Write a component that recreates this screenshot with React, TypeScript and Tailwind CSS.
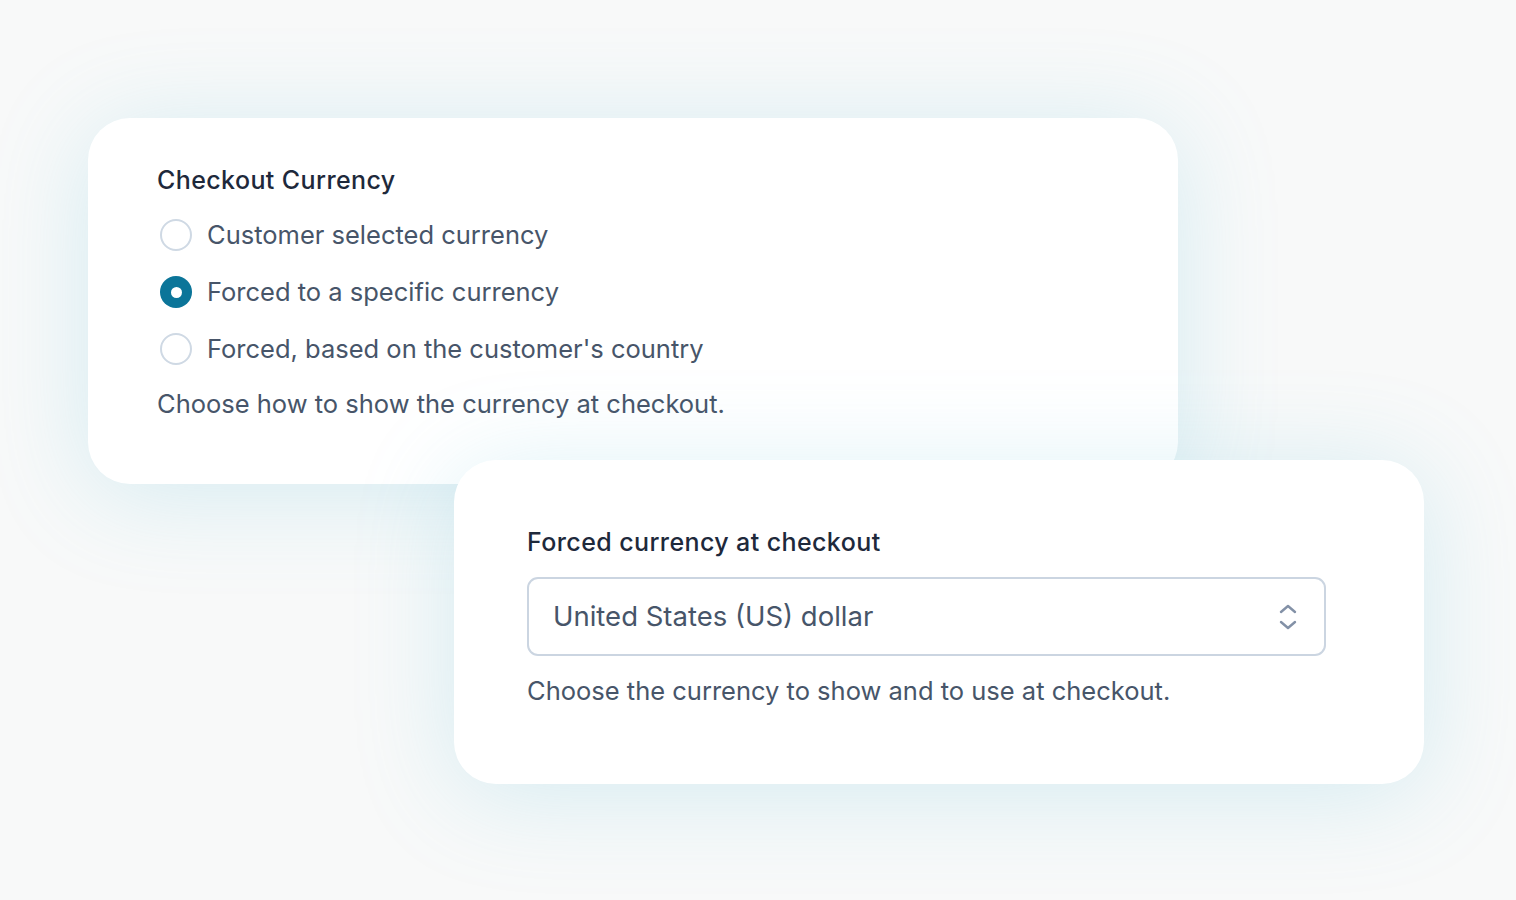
import React from "react";

function Radio({ checked, label }: { checked?: boolean; label: string }) {
  return (
    <div className="flex items-center h-[32px]">
      {checked ? (
        <span className="w-[32px] h-[32px] rounded-full bg-[#0b7599] flex items-center justify-center ml-[3px]">
          <span className="w-[11px] h-[11px] rounded-full bg-white" />
        </span>
      ) : (
        <span className="w-[32px] h-[32px] rounded-full border-2 border-[#cfd9e4] bg-white ml-[3px]" />
      )}
      <span className="ml-[15px] text-[25.5px] text-[#475569]">{label}</span>
    </div>
  );
}

export default function App() {
  return (
    <div
      className="w-full min-h-[900px] bg-[#f8f9f9] pt-[118px] overflow-hidden"
      style={{ fontFamily: "Inter, 'Noto Sans', sans-serif" }}
    >
      <div className="relative z-0 ml-[88px] w-[1090px] h-[366px] rounded-[42px] bg-white shadow-[0_10px_100px_rgba(90,190,220,0.22)] pl-[69px] pt-[46px]">
        <div className="text-[25px] font-medium text-[#1e293b] leading-[32px] tracking-[0.4px]">Checkout Currency</div>
        <div className="mt-[23px] flex flex-col gap-[25px]">
          <Radio label="Customer selected currency" />
          <Radio checked label="Forced to a specific currency" />
          <Radio label="Forced, based on the customer's country" />
        </div>
        <div className="mt-[22px] text-[25.5px] text-[#475569] leading-[34px]">
          Choose how to show the currency at checkout.
        </div>
      </div>
      <div className="relative z-10 -mt-[24px] ml-[454px] w-[970px] h-[324px] rounded-[42px] bg-white shadow-[0_10px_100px_rgba(90,190,220,0.22)] pl-[73px] pt-[66px]">
        <div className="text-[25px] font-medium text-[#1e293b] leading-[32px] tracking-[0.4px]">Forced currency at checkout</div>
        <div className="mt-[19px] w-[799px] h-[79px] rounded-[11px] border-2 border-[#cbd5e1] flex items-center justify-between pl-[24px] pr-[26px]">
          <span className="text-[27.5px] text-[#475569] leading-[34px] -mt-[2px]">United States (US) dollar</span>
          <svg width="20" height="30" viewBox="0 0 20 30" fill="none" stroke="#8391a7" strokeWidth="2.4" strokeLinecap="round" strokeLinejoin="round">
            <path d="M3 10 L10 4 L17 10" />
            <path d="M3 20 L10 26 L17 20" />
          </svg>
        </div>
        <div className="mt-[18px] text-[25.5px] text-[#475569] leading-[34px]">
          Choose the currency to show and to use at checkout.
        </div>
      </div>
    </div>
  );
}
